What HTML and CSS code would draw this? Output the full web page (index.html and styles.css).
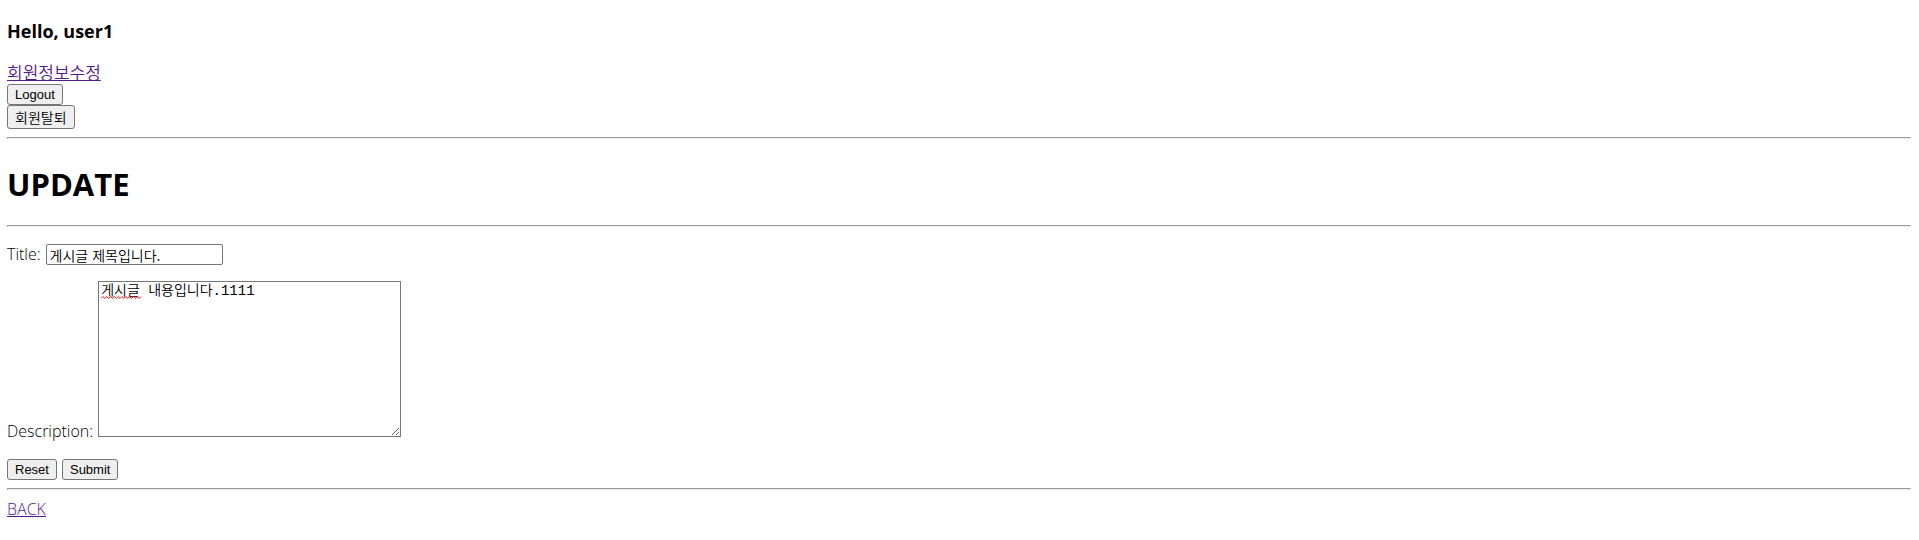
FILE: index.html
```html
<!DOCTYPE html>
<html lang="ko">
<head>
<meta charset="utf-8">
<title>UPDATE</title>
<link rel="stylesheet" href="styles.css">
</head>
<body>
<header class="account">
  <h3 class="greeting">Hello, user1</h3>
  <a class="link link-ko" href="#profile">회원정보수정</a>
  <form class="account-form"><button class="button" type="button">Logout</button></form>
  <form class="account-form"><button class="button button-ko" type="button">회원탈퇴</button></form>
</header>
<hr class="rule">
<main>
  <h1 class="title">UPDATE</h1>
  <hr class="rule">
  <form class="editor">
    <div class="row">
      <label for="title">Title:</label>
      <input class="field" id="title" type="text" value="게시글 제목입니다.">
    </div>
    <div class="row row-area">
      <label class="label-area" for="description">Description:</label>
      <div class="area-wrap">
        <textarea class="area" id="description" spellcheck="false">게시글 내용입니다.1111</textarea>
        <svg class="squiggle" viewBox="0 0 42 3" aria-hidden="true"><path d="M0 2.5 2 .5 4 2.5 6 .5 8 2.5 10 .5 12 2.5 14 .5 16 2.5 18 .5 20 2.5 22 .5 24 2.5 26 .5 28 2.5 30 .5 32 2.5 34 .5 36 2.5 38 .5 40 2.5 42 .5" fill="none" stroke="#f00"/></svg>
      </div>
    </div>
    <div class="row">
      <button class="button" type="reset">Reset</button>
      <button class="button" type="submit">Submit</button>
    </div>
  </form>
</main>
<hr class="rule">
<a class="link" href="#back">BACK</a>
</body>
</html>
```
FILE: styles.css
```css
body {
  margin: 8px 8px 8px 7px;
  background: #fff;
  color: #000;
  font: 300 16px/21px "Open Sans", "Noto Sans CJK KR", sans-serif;
}

.account {
  display: flex;
  flex-direction: column;
  align-items: flex-start;
}

.greeting {
  margin: 11px 0 18px;
  font-size: 18px;
  line-height: 24px;
}

.link {
  color: #551a8b;
  line-height: 23px;
}

.link-ko {
  margin-bottom: 2px;
  font-family: "Noto Sans CJK KR", sans-serif;
  font-size: 17px;
  font-weight: 350;
  line-height: 21px;
}

.account-form {
  display: flex;
}

.button {
  box-sizing: border-box;
  height: 21px;
  margin: 0;
  padding: 0 7px;
  border: 1px solid #767676;
  border-radius: 3px;
  background: #efefef;
  color: #000;
  font: 13px/19px "Liberation Sans", Arial, sans-serif;
}

.button-ko {
  height: 24px;
  font: 350 14px/20px "Noto Sans CJK KR", sans-serif;
}

.rule {
  margin: 8px 0;
  border: 1px solid;
  border-color: #9a9a9a #eee #eee #9a9a9a;
}

.title {
  margin: 25px 0 21px;
  font-size: 31px;
  line-height: 40px;
}

.editor {
  display: flex;
  flex-direction: column;
  gap: 16px;
  margin-top: 17px;
}

.row {
  display: flex;
  align-items: center;
  gap: 5px;
}

.row-area {
  align-items: flex-end;
  margin-bottom: 6px;
}

.label-area {
  line-height: 12px;
}

.field {
  box-sizing: border-box;
  width: 177px;
  height: 21px;
  padding: 0 3px;
  border: 1px solid #767676;
  border-radius: 2px;
  font: 350 14px/19px "Noto Sans CJK KR", sans-serif;
}

.area-wrap {
  position: relative;
}

.area {
  display: block;
  box-sizing: border-box;
  width: 303px;
  height: 156px;
  margin: 0;
  padding: 0 2px;
  border: 1px solid #767676;
  font: 350 14px/19px "Liberation Mono", "Noto Sans CJK KR", monospace;
}

.squiggle {
  position: absolute;
  top: 15px;
  left: 3px;
  width: 40px;
  height: 3px;
}
```
